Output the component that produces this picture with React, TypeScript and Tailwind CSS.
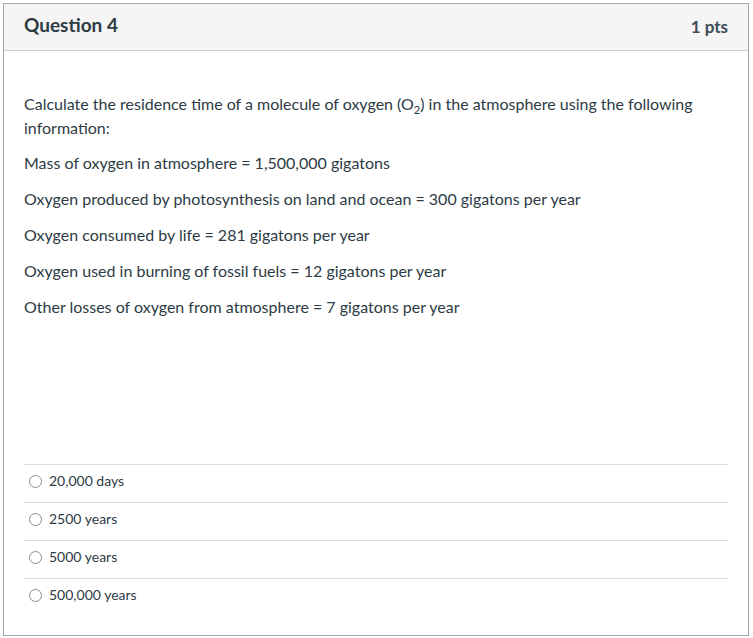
const LINES = [
  'Mass of oxygen in atmosphere = 1,500,000 gigatons',
  'Oxygen produced by photosynthesis on land and ocean = 300 gigatons per year',
  'Oxygen consumed by life = 281 gigatons per year',
  'Oxygen used in burning of fossil fuels = 12 gigatons per year',
  'Other losses of oxygen from atmosphere = 7 gigatons per year',
];

const ANSWERS = ['20,000 days', '2500 years', '5000 years', '500,000 years'];

export default function App() {
  return (
    <div className="bg-white min-h-[638px] pt-[3px] pl-[3px] font-['Lato','Noto_Sans',sans-serif] text-[#2d3b45]">
      <div className="w-[746px] h-[633px] border border-[#a5a5a5] flex flex-col">
        <div className="h-[47px] bg-[#f5f5f5] border-b border-[#c7cdd1] flex items-center justify-between pl-5 pr-5 pb-[3px]">
          <h2 className="text-[19px] font-bold">Question 4</h2>
          <span className="text-[17px] font-bold text-[#3d4a54] pt-[3px]">1 pts</span>
        </div>

        <div className="flex-1 flex flex-col px-5 pt-[41px]">
          <div className="text-[16px] leading-6">
            <p className="mb-[11px]">
              Calculate the residence time of a molecule of oxygen (O
              <span className="text-[11px] leading-none relative top-[4px]">2</span>) in the atmosphere using the following information:
            </p>
            <div className="space-y-3">
              {LINES.map((line) => (
                <p key={line}>{line}</p>
              ))}
            </div>
          </div>

          <div className="mt-auto mb-[19px]">
            {ANSWERS.map((a) => (
              <div key={a} className="h-[38px] border-t border-[#dcdcdc] flex items-start pl-[5px] pt-[7px] gap-[7px]">
                <span className="w-[13px] h-[13px] mt-[3px] rounded-full border border-[#8a8a8a] bg-white" />
                <span className="text-[14px] leading-[18px]">{a}</span>
              </div>
            ))}
          </div>
        </div>
      </div>
    </div>
  );
}
